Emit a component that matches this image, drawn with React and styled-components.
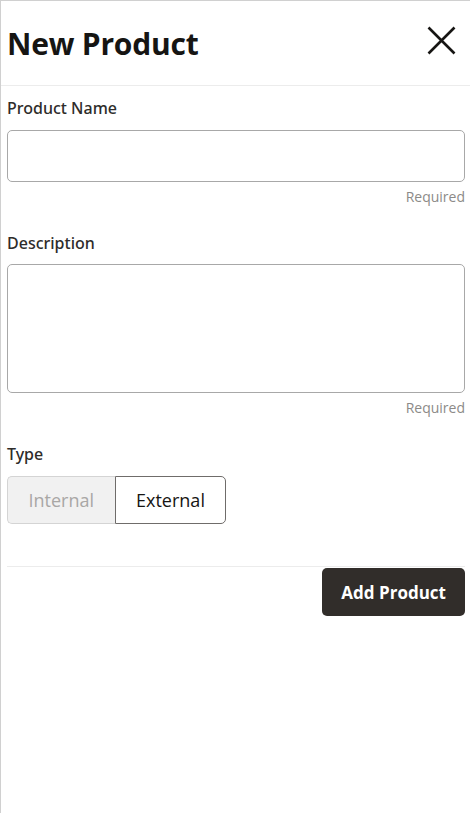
import React, { useState } from 'react';
import styled, { createGlobalStyle } from 'styled-components';

const GlobalStyle = createGlobalStyle`
  html, body {
    margin: 0;
    padding: 0;
    background: #fff;
  }
  body {
    font-family: 'Open Sans', 'Noto Sans', sans-serif;
    color: #161513;
  }
  * { box-sizing: border-box; }
`;

const Panel = styled.div`
  width: 470px;
  height: 813px;
  border-top: 1px solid #d0d0d0;
  border-left: 1px solid #d0d0d0;
  background: #fff;
`;

const Header = styled.div`
  display: flex;
  align-items: center;
  justify-content: space-between;
  height: 85px;
  padding: 0 14px 0 6px;
  border-bottom: 1px solid #ececec;
`;

const Title = styled.h1`
  margin: 0;
  font-size: 30px;
  font-weight: 700;
  color: #161513;
  letter-spacing: -0.2px;
`;

const CloseButton = styled.button`
  display: flex;
  align-items: center;
  justify-content: center;
  width: 30px;
  height: 30px;
  padding: 0;
  margin-bottom: 6px;
  border: none;
  background: transparent;
  cursor: pointer;
`;

const Body = styled.div`
  padding: 11px 5px 0 6px;
`;

const Field = styled.div`
  display: flex;
  flex-direction: column;
`;

const Label = styled.label`
  font-family: 'Noto Sans', 'Open Sans', sans-serif;
  font-size: 16px;
  font-weight: 500;
  color: #2e2c2a;
  line-height: 22px;
  margin-bottom: ${(p) => p.$gap || 11}px;
`;

const TextInput = styled.input`
  height: 52px;
  border: 1px solid #a8a8a8;
  border-radius: 5px;
  padding: 0 12px;
  font: inherit;
  font-size: 16px;
  outline: none;
`;

const TextArea = styled.textarea`
  height: 129px;
  border: 1px solid #a8a8a8;
  border-radius: 5px;
  padding: 10px 12px;
  font: inherit;
  font-size: 16px;
  resize: none;
  outline: none;
`;

const Hint = styled.div`
  align-self: flex-end;
  font-size: 14px;
  color: #8c8a88;
  line-height: 20px;
  margin-top: 5px;
  margin-bottom: 25px;
`;

const Toggle = styled.div`
  display: flex;
`;

const ToggleOption = styled.button`
  height: 48px;
  padding: 0 20.5px;
  font: inherit;
  font-size: 18px;
  cursor: pointer;
  border: 1px solid ${(p) => (p.$active ? '#6f6c6a' : '#d4d4d4')};
  background: ${(p) => (p.$active ? '#fff' : '#f1f1f1')};
  color: ${(p) => (p.$active ? '#161513' : '#a9a7a5')};
  &:first-child {
    border-radius: 5px 0 0 5px;
    border-right: none;
  }
  &:last-child {
    border-radius: 0 5px 5px 0;
  }
`;

const Footer = styled.div`
  display: flex;
  justify-content: flex-end;
  margin-top: 42px;
  border-top: 1px solid #ececec;
  padding-top: 1px;
`;

const PrimaryButton = styled.button`
  height: 48px;
  padding: 0 19px;
  border: none;
  border-radius: 5px;
  background: #312d2a;
  color: #fff;
  font: inherit;
  font-size: 17px;
  font-weight: 700;
  cursor: pointer;
`;

export default function App() {
  const [type, setType] = useState('external');

  return (
    <>
      <GlobalStyle />
      <Panel>
        <Header>
          <Title>New Product</Title>
          <CloseButton aria-label="Close">
            <svg width="29" height="29" viewBox="0 0 29 29">
              <path d="M1.5 1.5 L27.5 27.5 M27.5 1.5 L1.5 27.5" stroke="#161513" strokeWidth="2.6" fill="none" />
            </svg>
          </CloseButton>
        </Header>
        <Body>
          <Field>
            <Label>Product Name</Label>
            <TextInput />
            <Hint>Required</Hint>
          </Field>
          <Field>
            <Label $gap={10}>Description</Label>
            <TextArea />
            <Hint>Required</Hint>
          </Field>
          <Field>
            <Label>Type</Label>
            <Toggle>
              <ToggleOption $active={type === 'internal'} onClick={() => setType('internal')}>
                Internal
              </ToggleOption>
              <ToggleOption $active={type === 'external'} onClick={() => setType('external')}>
                External
              </ToggleOption>
            </Toggle>
          </Field>
          <Footer>
            <PrimaryButton>Add Product</PrimaryButton>
          </Footer>
        </Body>
      </Panel>
    </>
  );
}
